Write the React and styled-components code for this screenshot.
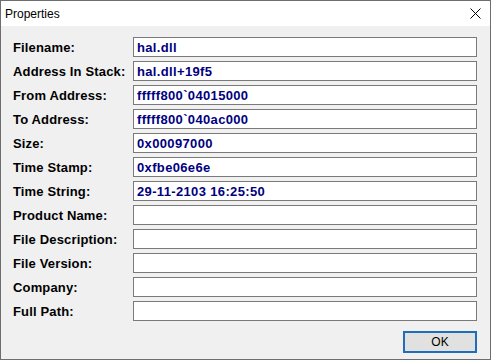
import React from 'react';
import styled, { createGlobalStyle } from 'styled-components';

const GlobalStyle = createGlobalStyle`
  html, body {
    margin: 0;
    padding: 0;
    background: #ffffff;
  }
  * {
    box-sizing: border-box;
  }
`;

const Window = styled.div`
  width: 491px;
  height: 360px;
  border: 1px solid #6e6e6e;
  background: #f0f0f0;
  display: flex;
  flex-direction: column;
  font-family: "Liberation Sans", Arial, sans-serif;
`;

const TitleBar = styled.div`
  height: 25px;
  background: #ffffff;
  display: flex;
  align-items: center;
  justify-content: space-between;
  padding-left: 4px;
`;

const Title = styled.span`
  font-size: 12px;
  color: #000;
`;

const CloseButton = styled.div`
  width: 29px;
  height: 25px;
  display: flex;
  align-items: center;
  justify-content: center;
`;

const Body = styled.div`
  flex: 1;
  display: flex;
  flex-direction: column;
  padding: 11px 13px 0 12px;
`;

const Form = styled.div`
  display: grid;
  grid-template-columns: 120px 1fr;
  row-gap: 4px;
`;

const Label = styled.div`
  height: 20px;
  display: flex;
  align-items: center;
  padding-top: 1px;
  font-size: 13px;
  font-weight: bold;
  letter-spacing: 0.15px;
  color: #000;
  white-space: nowrap;
`;

const Field = styled.div`
  height: 20px;
  background: #fff;
  border: 1px solid #7a7a7a;
  padding: 0 3px;
  display: flex;
  align-items: center;
  font-size: 13px;
  font-weight: bold;
  letter-spacing: 0.35px;
  color: #000080;
  white-space: nowrap;
  overflow: hidden;
`;

const Footer = styled.div`
  display: flex;
  justify-content: flex-end;
  margin-top: 10px;
`;

const Button = styled.button`
  width: 74px;
  height: 22px;
  border: 2px solid ${({ primary }) => (primary ? '#1f6fb8' : '#adadad')};
  background: #e1e1e1;
  font-family: "Liberation Sans", Arial, sans-serif;
  font-size: 12px;
  color: #000;
  padding: 0;
  display: flex;
  align-items: center;
  justify-content: center;
`;

const rows = [
  ['Filename:', 'hal.dll'],
  ['Address In Stack:', 'hal.dll+19f5'],
  ['From Address:', 'fffff800`04015000'],
  ['To Address:', 'fffff800`040ac000'],
  ['Size:', '0x00097000'],
  ['Time Stamp:', '0xfbe06e6e'],
  ['Time String:', '29-11-2103 16:25:50'],
  ['Product Name:', ''],
  ['File Description:', ''],
  ['File Version:', ''],
  ['Company:', ''],
  ['Full Path:', ''],
];

const CloseIcon = () => (
  <svg width="11" height="11" viewBox="0 0 11 11">
    <path d="M0.5 0.5 L10.5 10.5 M10.5 0.5 L0.5 10.5" stroke="#000" strokeWidth="1" fill="none" />
  </svg>
);

export default function App() {
  return (
    <>
      <GlobalStyle />
      <Window>
        <TitleBar>
          <Title>Properties</Title>
          <CloseButton>
            <CloseIcon />
          </CloseButton>
        </TitleBar>
        <Body>
          <Form>
            {rows.map(([label, value]) => (
              <React.Fragment key={label}>
                <Label>{label}</Label>
                <Field>{value}</Field>
              </React.Fragment>
            ))}
          </Form>
          <Footer>
            <Button primary>OK</Button>
          </Footer>
        </Body>
      </Window>
    </>
  );
}
